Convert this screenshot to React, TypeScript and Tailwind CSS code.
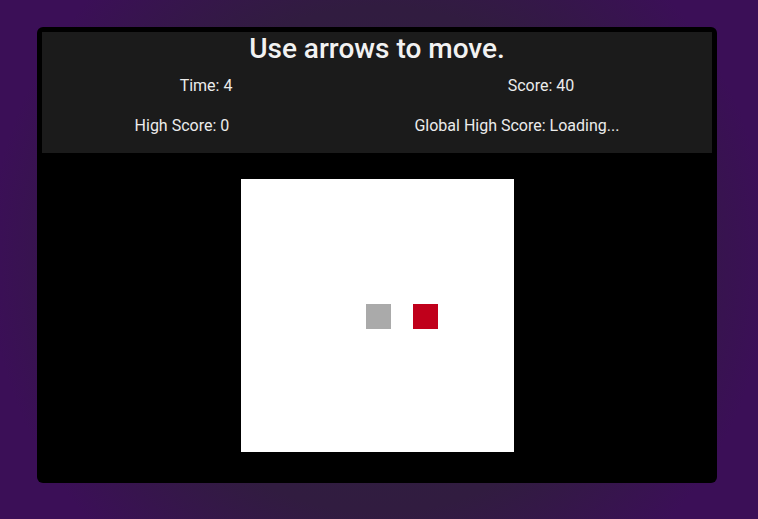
export default function App() {
  return (
    <div
      className="w-full h-[519px] flex justify-start pl-[37px] pt-[27px] bg-[radial-gradient(circle_at_center,#2e2040_0%,#311c40_55%,#3b0f57_85%)]"
      style={{ fontFamily: 'Roboto, "Noto Sans", sans-serif' }}
    >
      <div className="w-[680px] h-[456px] bg-black rounded-[6px] p-[5px] flex flex-col">
        <div className="bg-[#1b1b1b] text-[#ececec] h-[121px] flex flex-col">
          <h1 className="text-[28px] leading-[34px] font-medium text-center text-[#f2f2f2]">
            Use arrows to move.
          </h1>
          <div className="mt-[8px] flex justify-around text-[16px] leading-[24px]">
            <span>Time: 4</span>
            <span>Score: 40</span>
          </div>
          <div className="mt-[16px] flex justify-around text-[16px] leading-[24px]">
            <span>High Score: 0</span>
            <span>Global High Score: Loading...</span>
          </div>
        </div>
        <div className="flex-1 flex items-center justify-center">
          <div className="relative w-[273px] h-[273px] bg-white">
            <div className="absolute left-[125px] top-[125px] w-[25px] h-[25px] bg-[#aaaaaa]" />
            <div className="absolute left-[172px] top-[125px] w-[25px] h-[25px] bg-[#c0001b]" />
          </div>
        </div>
      </div>
    </div>
  )
}
